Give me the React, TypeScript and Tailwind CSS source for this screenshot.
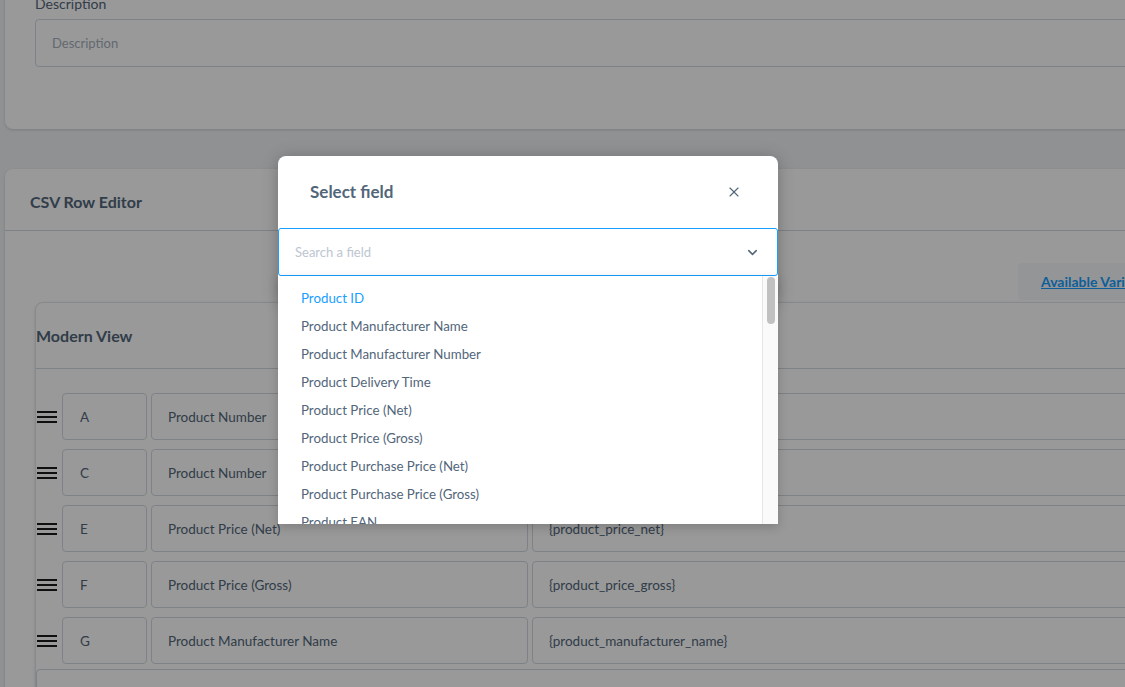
import { X, ChevronDown } from "lucide-react";

interface IRow {
  col: string;
  label: string;
  value: string;
}

const rows: IRow[] = [
  { col: "A", label: "Product Number", value: "{product_number}" },
  { col: "C", label: "Product Number", value: "{product_number}" },
  { col: "E", label: "Product Price (Net)", value: "{product_price_net}" },
  { col: "F", label: "Product Price (Gross)", value: "{product_price_gross}" },
  { col: "G", label: "Product Manufacturer Name", value: "{product_manufacturer_name}" },
];

const fields = [
  "Product ID",
  "Product Manufacturer Name",
  "Product Manufacturer Number",
  "Product Delivery Time",
  "Product Price (Net)",
  "Product Price (Gross)",
  "Product Purchase Price (Net)",
  "Product Purchase Price (Gross)",
  "Product EAN",
];

function Hamburger() {
  return (
    <div className="ml-[1px] flex w-[20px] shrink-0 flex-col gap-[3px]">
      <span className="h-[2px] w-full bg-[#1a1a1a]" />
      <span className="h-[2px] w-full bg-[#1a1a1a]" />
      <span className="h-[2px] w-full bg-[#1a1a1a]" />
    </div>
  );
}

function RowItem({ row }: { row: IRow }) {
  return (
    <div className="flex h-[47px] items-center">
      <Hamburger />
      <div className="ml-[5px] flex h-full w-[85px] shrink-0 items-center rounded-[4px] border border-[#d1d9e0] bg-white px-[17px] pt-[1px] text-[13.5px] text-[#52667a]">
        {row.col}
      </div>
      <div className="ml-[4px] flex h-full w-[377px] shrink-0 items-center rounded-[4px] border border-[#d1d9e0] bg-white px-[16px] pt-[1px] text-[13.5px] text-[#52667a]">
        {row.label}
      </div>
      <div className="ml-[4px] flex h-full flex-1 items-center rounded-[4px] border border-[#d1d9e0] bg-white px-[16px] pt-[1px] text-[13.5px] text-[#52667a]">
        {row.value}
      </div>
    </div>
  );
}

function SelectFieldModal() {
  return (
    <div className="absolute left-[278px] top-[156px] w-[500px] rounded-t-[8px] bg-white shadow-[0_2px_16px_rgba(0,0,0,0.25)]">
      <div className="flex h-[72px] items-center justify-between pl-[32px] pr-[36px]">
        <h2 className="text-[17px] font-bold text-[#52667a]">Select field</h2>
        <X size={16} strokeWidth={1.7} className="text-[#52667a]" />
      </div>
      <div className="relative pb-[24px]">
        <div className="flex h-[48px] items-center justify-between rounded-[3px] border border-[#189eff] pl-[16px] pr-[17px] pt-[1px]">
          <span className="text-[13px] text-[#bcc6d1]">Search a field</span>
          <ChevronDown size={15} strokeWidth={2.4} className="text-[#52667a]" />
        </div>
        <div className="absolute left-0 right-0 top-[48px] flex h-[248px] overflow-hidden bg-white shadow-[0_3px_10px_rgba(0,0,0,0.18)]">
          <ul className="flex-1 pt-[9px]">
            {fields.map((field, i) => (
              <li
                key={field}
                className={
                  "flex h-[28px] items-center px-[23px] text-[13.3px] " +
                  (i === 0 ? "text-[#189eff]" : "text-[#52667a]")
                }
              >
                {field}
              </li>
            ))}
          </ul>
          <div className="flex w-[16px] shrink-0 justify-center border-l border-[#e6e6e6] bg-[#fafafa] pt-[1px]">
            <div className="h-[47px] w-[8px] rounded-full bg-[#c1c1c1]" />
          </div>
        </div>
      </div>
    </div>
  );
}

export default function App() {
  return (
    <div
      className="relative h-[687px] w-[1125px] overflow-hidden bg-[#f0f2f5]"
      style={{ fontFamily: "Lato, 'Noto Sans', sans-serif" }}
    >
      <div className="w-[1238px] pl-[5px]">
        {/* description card */}
        <div className="-mt-[30px] rounded-b-[8px] bg-white px-[30px] pb-[62px] pt-[24px] shadow-[0_1px_3px_rgba(0,0,0,0.15)]">
          <label className="block h-[20px] text-[14px] leading-[20px] text-[#52667a]">
            Description
          </label>
          <div className="mt-[5px] flex h-[48px] items-center rounded-[4px] border border-[#d1d9e0] bg-white px-[16px] pt-[2px] text-[13px] text-[#a4b0bc]">
            Description
          </div>
        </div>

        {/* csv row editor */}
        <div className="mt-[40px] rounded-t-[8px] bg-white shadow-[0_1px_3px_rgba(0,0,0,0.15)]">
          <div className="flex h-[62px] items-center border-b border-[#d1d9e0] px-[25px] pt-[5px]">
            <h2 className="text-[16px] font-bold text-[#52667a]">CSV Row Editor</h2>
          </div>
          <div className="px-[30px] pt-[32px]">
            <div className="flex justify-end">
              <button
                type="button"
                className="h-[37px] w-[190px] rounded-[4px] bg-[#f7f9fa] pl-[23px] text-left text-[14px] font-bold text-[#189eff] underline"
              >
                Available Variables
              </button>
            </div>
            <div className="mt-[2px] rounded-t-[8px] border border-[#e0e6eb] bg-white shadow-[0_1px_3px_rgba(0,0,0,0.12)]">
              <div className="flex h-[66px] items-center border-b border-[#d1d9e0]">
                <h3 className="text-[16px] font-bold text-[#52667a]">Modern View</h3>
              </div>
              <div className="flex flex-col gap-[9px] pt-[24px]">
                {rows.map((row) => (
                  <RowItem key={row.col} row={row} />
                ))}
              </div>
              <div className="mt-[5px] h-[60px] rounded-[4px] border border-[#d1d9e0] bg-white" />
            </div>
          </div>
        </div>
      </div>

      <div className="absolute inset-0 bg-black/40" />
      <SelectFieldModal />
    </div>
  );
}
